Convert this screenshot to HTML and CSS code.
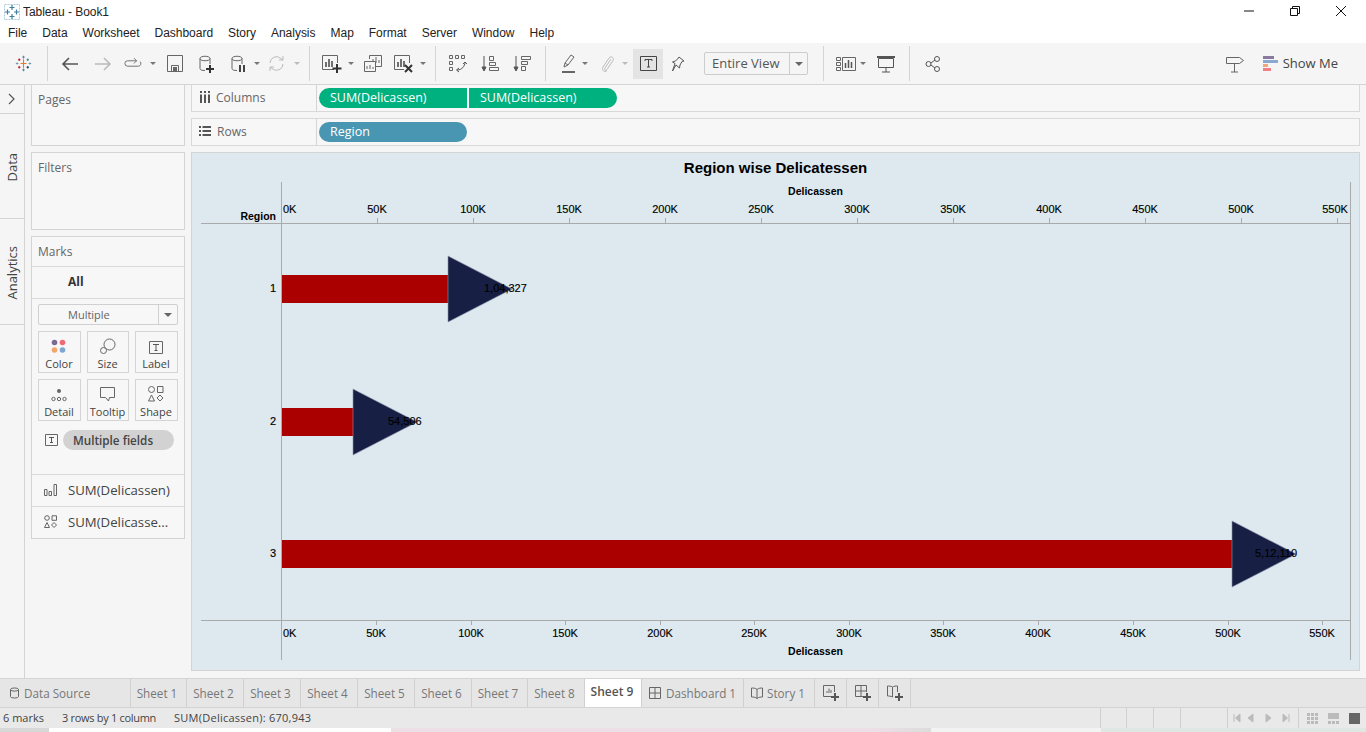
FILE: index.html
```html
<!DOCTYPE html>
<html lang="en">
<head>
<meta charset="utf-8">
<title>Tableau - Book1</title>
<link rel="stylesheet" href="styles.css">
</head>
<body>
<header class="titlebar">
  <div class="title-left">
    <svg class="app-logo" width="18" height="18" viewBox="0 0 18 18"><path d="M1.500 1.500h15v15h-15z" fill="none" stroke="#a9c8da" stroke-dasharray="2 1"/><g stroke="#3f7ea3" stroke-width="1.200" fill="none"><path d="M9 2v5M6.500 4.500h5M9 11v5M6.500 13.500h5M2 9h5M4.500 6.500v5M11 9h5M13.500 6.500v5"/></g></svg>
    <span>Tableau - Book1</span>
  </div>
  <div class="win-buttons">
    <svg width="12" height="12" viewBox="0 0 12 12"><path d="M1 6h10" stroke="#111" fill="none"/></svg>
    <svg width="12" height="12" viewBox="0 0 12 12"><path d="M1.500 3.500h7v7h-7zM3.500 3.500v-2h7v7h-2" stroke="#111" fill="none"/></svg>
    <svg width="12" height="12" viewBox="0 0 12 12"><path d="M1 1l10 10M11 1L1 11" stroke="#111" fill="none"/></svg>
  </div>
</header>
<nav class="menubar">
  <span>File</span><span>Data</span><span>Worksheet</span><span>Dashboard</span><span>Story</span><span>Analysis</span><span>Map</span><span>Format</span><span>Server</span><span>Window</span><span>Help</span>
</nav>
<div class="toolbar">
  <div class="tool-group tg-logo">
    <svg width="17" height="17" viewBox="0 0 20 20"><g fill="none" stroke-width="1.300"><path d="M10 5v10M6.500 10h7" stroke="#e8762b"/><path d="M10 1v3M8.700 2.500h2.600M10 16v3M8.700 17.500h2.600" stroke="#5b879b"/><path d="M1 10h3M2.500 8.700v2.600M16 10h3M17.500 8.700v2.600" stroke="#7099a6"/><path d="M5 4v3M3.700 5.500h2.600" stroke="#c72035"/><path d="M15 4v3M13.700 5.500h2.600" stroke="#59879b"/><path d="M5 13v3M3.700 14.500h2.600" stroke="#c72035"/><path d="M15 13v3M13.700 14.500h2.600" stroke="#1f447d"/></g></svg>
  </div>
  <div class="tool-group tg-history">
    <svg width="18" height="16" viewBox="0 0 18 16"><path d="M17 8H2M8 2L2 8l6 6" fill="none" stroke="#555" stroke-width="1.600"/></svg>
    <svg class="gap15" width="18" height="16" viewBox="0 0 18 16"><path d="M1 8h15M10 2l6 6-6 6" fill="none" stroke="#bbb" stroke-width="1.600"/></svg>
    <svg class="gap12" width="18" height="13" viewBox="0 0 20 14"><path d="M14 4H4a3 3 0 0 0 0 6h12a3 3 0 0 0 2-5M11 1l3 3-3 3" fill="none" stroke="#666"/></svg>
    <i class="caret"></i>
    <svg class="gap11" width="16" height="17" viewBox="0 0 16 17"><path d="M.5.500h15v16H.5zM4.500 16.500v-6h7v6" fill="none" stroke="#666"/><path d="M6 12h4v4H6z" fill="#666"/></svg>
    <svg class="gap16" width="16" height="18" viewBox="0 0 16 18"><path d="M1 3.500C1 .5 11 .5 11 3.500S1 6.500 1 3.500v10c0 1.500 2 2 5 2M11 3.500V9" fill="none" stroke="#666"/><path d="M10 10h2v3h3v2h-3v3h-2v-3H7v-2h3z" fill="#333"/></svg>
    <svg class="gap16" width="16" height="18" viewBox="0 0 16 18"><path d="M1 3.500C1 .5 11 .5 11 3.500S1 6.500 1 3.500v10c0 1.500 2 2 5 2M11 3.500V9" fill="none" stroke="#666"/><path d="M8 10h2v7H8zM12 10h2v7h-2z" fill="#444"/></svg>
    <i class="caret caret-m7"></i>
    <svg class="gap8" width="17" height="17" viewBox="0 0 17 17"><path d="M2 8a6.500 6.500 0 0 1 11-4.500L15 5M15 9a6.500 6.500 0 0 1-11 4.500L2 12M15 1v4h-4M2 16v-4h4" fill="none" stroke="#bbb"/></svg>
    <i class="caret caret-dim caret-m9"></i>
  </div>
  <div class="tool-group tg-sheet">
    <svg width="20" height="18" viewBox="0 0 20 18"><path d="M12 14.500H.5V.5h15V8" fill="none" stroke="#666"/><path d="M4 7v5M7 4v8M10 6v6" stroke="#444" stroke-width="1.500"/><path d="M14 9h2v3.500h3.500v2H16V18h-2v-3.500h-3.500v-2H14z" fill="#333"/></svg>
    <i class="caret caret-m6"></i>
    <svg class="gap10" width="18" height="17" viewBox="0 0 18 17"><path d="M5.500 4V.5h12v11H12M.5 6.500h11v10H.5z" fill="#f5f5f5" stroke="#666"/><path d="M9 6V4M12 8V2M15 8V5M3 14v-3M6 14v-4M9 14v-2" stroke="#666"/></svg>
    <svg class="gap12" width="20" height="18" viewBox="0 0 20 18"><path d="M10 14.500H.5V.5h15V8" fill="none" stroke="#666"/><path d="M4 7v5M7 4v8M10 6v6" stroke="#444" stroke-width="1.500"/><path d="M11 10l7 7M18 10l-7 7" stroke="#333" stroke-width="2"/></svg>
    <i class="caret caret-m6"></i>
  </div>
  <div class="tool-group tg-sort">
    <svg width="18" height="18" viewBox="0 0 18 18"><path d="M.5.500h3v3h-3zM6.500.500h3v3h-3zM12.500.500h3v3h-3zM.5 6.500h3v3h-3zM.5 12.500h3v3h-3z" fill="none" stroke="#666"/><path d="M16 7c0 4-3 8-8 8M10 13l-2.500 2 2.500 2M14 9l2-2 2 2" fill="none" stroke="#555"/></svg>
    <svg class="gap14" width="18" height="18" viewBox="0 0 18 18"><path d="M3 1v14M1 12l2 4 2-4z" fill="#555" stroke="#555"/><path d="M8.500 1.500h4v4h-4zM8.500 7.500h6v3h-6zM8.500 12.500h9v3h-9z" fill="none" stroke="#666"/></svg>
    <svg class="gap14" width="18" height="18" viewBox="0 0 18 18"><path d="M3 1v14M1 12l2 4 2-4z" fill="#555" stroke="#555"/><path d="M8.500 1.500h9v3h-9zM8.500 6.500h6v3h-6zM8.500 11.500h4v4h-4z" fill="none" stroke="#666"/></svg>
  </div>
  <div class="tool-group tg-format">
    <svg width="16" height="20" viewBox="0 0 16 20"><path d="M3 13l1-4 6-8 3 2-6 8zM4 9l3 2" fill="none" stroke="#666"/><path d="M1 17h13v2H1z" fill="#666"/></svg>
    <i class="caret caret-m5"></i>
    <svg class="gap12" width="14" height="18" viewBox="0 0 14 18"><path d="M11 4L5 13c-1.500 2 1 3 2 1.500l6-9c1.500-3-2-5-4-2.500L3 12c-2 3 2 6 4 3.500" fill="none" stroke="#bbb"/></svg>
    <i class="caret caret-dim"></i>
    <span class="tool-active"><svg width="17" height="15" viewBox="0 0 17 15"><path d="M.5.500h16v14H.5z" fill="none" stroke="#444"/><path d="M5 3.500h7M8.500 3.500V11M7 11h3M5 3.500V5M12 3.500V5" fill="none" stroke="#444"/></svg></span>
    <svg class="gap8" width="14" height="16" viewBox="0 0 14 16"><path d="M8 1l5 4-2 .5-2 3.500-.5 3L5 9 1.500 15 4 7.500 1.500 6l3-1 2-2z" fill="none" stroke="#555"/></svg>
    <div class="fit-select"><span class="fit-label">Entire View</span><span class="fit-arrow"><i class="caret caret-dark"></i></span></div>
  </div>
  <div class="tool-group tg-show">
    <svg width="20" height="16" viewBox="0 0 20 16"><path d="M.5 1.500h4v3h-4zM.5 6.500h4v3h-4zM.5 11.500h4v3h-4zM6.500 1.500h13v13h-13z" fill="none" stroke="#666"/><path d="M9.500 7v5M12.500 4v8M15.500 6v6" stroke="#555" stroke-width="1.500"/></svg>
    <i class="caret caret-m4"></i>
    <svg class="gap11" width="18" height="18" viewBox="0 0 18 18"><path d="M1.500 3.500h15v9h-15zM9 12.500V17M5 17h8" fill="none" stroke="#555"/><path d="M0 1h18v2H0z" fill="#555"/></svg>
  </div>
  <div class="tool-group tg-share">
    <svg width="16" height="16" viewBox="0 0 16 16"><g fill="none" stroke="#555"><circle cx="3.500" cy="8" r="2.500"/><circle cx="12" cy="3" r="2.500"/><circle cx="12" cy="13" r="2.500"/><path d="M6 7l4-3M6 9l4 3"/></g></svg>
  </div>
  <div class="tool-right">
    <svg width="18" height="18" viewBox="0 0 18 18"><path d="M.5 2.500h13l4 3-4 3H.5zM8.500 8.500V17M5 17h7" fill="none" stroke="#666"/></svg>
    <span class="show-me"><svg width="15" height="15" viewBox="0 0 15 15"><path d="M0 0h11v3H0z" fill="#8a7a9f"/><path d="M0 4h15v3H0z" fill="#8aa8d0"/><path d="M0 8h5v3H0z" fill="#f0a878"/><path d="M0 12h8v3H0z" fill="#f08088"/></svg><span class="show-me-text">Show Me</span></span>
  </div>
</div>
<main class="workspace">
  <aside class="rail">
    <div class="rail-cell rail-toggle"><svg width="8" height="12" viewBox="0 0 8 12"><path d="M1 1l5 5-5 5" fill="none" stroke="#555" stroke-width="1.200"/></svg></div>
    <div class="rail-cell rail-data"><span class="rail-text">Data</span></div>
    <div class="rail-cell rail-analytics"><span class="rail-text">Analytics</span></div>
  </aside>
  <section class="side">
    <div class="card card-pages"><div class="card-title">Pages</div></div>
    <div class="card card-filters"><div class="card-title">Filters</div></div>
    <div class="card card-marks">
      <div class="marks-title">Marks</div>
      <div class="marks-all">All</div>
      <div class="marks-body">
        <div class="mark-select"><span class="mark-select-label">Multiple</span><span class="mark-select-arrow"><i class="caret caret-dark"></i></span></div>
        <div class="mark-grid">
          <div class="mark-btn"><svg width="16" height="16" viewBox="0 0 16 16"><circle cx="3.500" cy="4.500" r="2.800" fill="#7b6a93"/><circle cx="11.500" cy="4.500" r="2.800" fill="#ef6a75"/><circle cx="3.500" cy="12" r="2.800" fill="#f2a66e"/><circle cx="11.500" cy="12" r="2.800" fill="#7ea6d0"/></svg><span>Color</span></div>
          <div class="mark-btn"><svg width="16" height="16" viewBox="0 0 16 16"><circle cx="9.500" cy="6.500" r="5.500" fill="none" stroke="#666"/><circle cx="3.500" cy="12.500" r="3" fill="#f7f7f7" stroke="#666"/></svg><span>Size</span></div>
          <div class="mark-btn"><svg width="14" height="13" viewBox="0 0 14 13"><path d="M.5.500h13v12H.5z" fill="none" stroke="#666"/><path d="M4 3.500h6M7 3.500v6M5.500 9.500h3" fill="none" stroke="#555"/></svg><span>Label</span></div>
          <div class="mark-btn"><svg width="16" height="14" viewBox="0 0 16 14"><circle cx="8" cy="3" r="2" fill="#666"/><g fill="none" stroke="#666"><circle cx="2.500" cy="11" r="1.700"/><circle cx="8" cy="11" r="1.700"/><circle cx="13.500" cy="11" r="1.700"/></g></svg><span>Detail</span></div>
          <div class="mark-btn"><svg width="15" height="15" viewBox="0 0 15 15"><path d="M.5.500h14v10H9.500l-1 3.500-3-3.500h-5z" fill="none" stroke="#666"/></svg><span>Tooltip</span></div>
          <div class="mark-btn"><svg width="16" height="16" viewBox="0 0 16 16"><g fill="none" stroke="#666"><circle cx="3.500" cy="3.500" r="3"/><path d="M9.500.5h5.500v6H9.500zM3.500 9l3 6h-6zM12 9l3 3-3 3-3-3z"/></g></svg><span>Shape</span></div>
        </div>
        <div class="mark-field">
          <svg width="13" height="12" viewBox="0 0 13 12"><path d="M.5.500h12v11H.5z" fill="none" stroke="#666"/><path d="M4 3.500h5M6.500 3.500v5M5 8.500h3" fill="none" stroke="#555"/></svg>
          <span class="pill-grey">Multiple fields</span>
        </div>
      </div>
      <div class="marks-row"><svg width="13" height="12" viewBox="0 0 13 12"><path d="M.5 5.500h2.500v6H.5zM5 7.500h2.500v4H5zM10 .5h2.500v11H10z" fill="none" stroke="#666"/></svg><span>SUM(Delicassen)</span></div>
      <div class="marks-row"><svg width="13" height="13" viewBox="0 0 13 13"><g fill="none" stroke="#666"><circle cx="3" cy="3" r="2.300"/><path d="M8 .8h4.500v4.500H8zM3 7.500l2.500 5H.5zM10 7.500l2.500 2.500-2.500 2.500L7.500 10z"/></g></svg><span>SUM(Delicasse...</span></div>
    </div>
  </section>
  <section class="content">
    <div class="shelf shelf-columns">
      <div class="shelf-label"><svg width="11" height="12" viewBox="0 0 11 12"><path d="M1 0h2v2H1zM5 0h2v2H5zM9 0h2v2H9zM1 3.500h2V12H1zM5 3.500h2V12H5zM9 3.500h2V12H9z" fill="#555"/></svg><span>Columns</span></div>
      <div class="shelf-pills"><span class="pill pill-green">SUM(Delicassen)</span><span class="pill pill-green">SUM(Delicassen)</span></div>
    </div>
    <div class="shelf shelf-rows">
      <div class="shelf-label"><svg width="12" height="10" viewBox="0 0 12 10"><path d="M0 0h2v2H0zM3.500 0H12v2H3.500zM0 4h2v2H0zM3.500 4H12v2H3.500zM0 8h2v2H0zM3.500 8H12v2H3.500z" fill="#555"/></svg><span>Rows</span></div>
      <div class="shelf-pills"><span class="pill pill-blue">Region</span></div>
    </div>
    <div class="viz">
      <svg class="chart" width="1167" height="517" viewBox="192 153 1167 517">
        <text class="t-title" x="775.500" y="173">Region wise Delicatessen</text>
        <text class="t-axis-title" x="815.500" y="195">Delicassen</text>
        <text class="t-axis-title t-end" x="276" y="220">Region</text>
        <g class="axis-lines">
          <path d="M281.500 182V660M201 223.500H1350.500M201 620.500H1350.500M1350.500 182V660"/>
          <path d="M377.500 218v5M473.500 218v5M569.500 218v5M665.500 218v5M761.500 218v5M857.500 218v5M953.500 218v5M1049.500 218v5M1145.500 218v5M1241.500 218v5M1337.500 218v5"/>
          <path d="M376.500 621v4M471.500 621v4M565.500 621v4M660.500 621v4M754.500 621v4M849.500 621v4M943.500 621v4M1038.500 621v4M1133.500 621v4M1228.500 621v4M1322.500 621v4"/>
        </g>
        <g class="ticks">
          <text x="283" y="213">0K</text><text class="t-mid" x="377" y="213">50K</text><text class="t-mid" x="473" y="213">100K</text><text class="t-mid" x="569" y="213">150K</text><text class="t-mid" x="665" y="213">200K</text><text class="t-mid" x="761" y="213">250K</text><text class="t-mid" x="857" y="213">300K</text><text class="t-mid" x="953" y="213">350K</text><text class="t-mid" x="1049" y="213">400K</text><text class="t-mid" x="1145" y="213">450K</text><text class="t-mid" x="1241" y="213">500K</text><text class="t-mid" x="1335" y="213">550K</text>
          <text x="283" y="637">0K</text><text class="t-mid" x="376" y="637">50K</text><text class="t-mid" x="471" y="637">100K</text><text class="t-mid" x="565" y="637">150K</text><text class="t-mid" x="660" y="637">200K</text><text class="t-mid" x="754" y="637">250K</text><text class="t-mid" x="849" y="637">300K</text><text class="t-mid" x="943" y="637">350K</text><text class="t-mid" x="1038" y="637">400K</text><text class="t-mid" x="1133" y="637">450K</text><text class="t-mid" x="1228" y="637">500K</text><text class="t-mid" x="1322" y="637">550K</text>
          <text class="t-end" x="276" y="292">1</text><text class="t-end" x="276" y="425">2</text><text class="t-end" x="276" y="557">3</text>
        </g>
        <text class="t-axis-title" x="815.500" y="655">Delicassen</text>
        <g class="bars">
          <rect x="282" y="275" width="200" height="28"/>
          <rect x="282" y="408" width="104" height="28"/>
          <rect x="282" y="540" width="982" height="28"/>
        </g>
        <g class="arrows">
          <path d="M448 256L512 289 448 322Z"/>
          <path d="M353 389L417 422 353 455Z"/>
          <path d="M1232 521L1296 554 1232 587Z"/>
        </g>
        <g class="ticks">
          <text x="484" y="292">1,04,327</text>
          <text x="388" y="425">54,506</text>
          <text x="1255" y="557">5,12,110</text>
        </g>
      </svg>
    </div>
  </section>
</main>
<div class="tabs">
  <div class="tab tab-source"><svg width="10" height="12" viewBox="0 0 10 12"><path d="M.5 2.500C.5.500 8.500.500 8.500 2.500v7C8.500 11.500.5 11.500.5 9.500zM.5 3c1 1.500 7 1.500 8 0" fill="none" stroke="#666"/></svg><span>Data Source</span></div>
  <div class="tab tab-56">Sheet 1</div><div class="tab">Sheet 2</div><div class="tab">Sheet 3</div><div class="tab">Sheet 4</div><div class="tab">Sheet 5</div><div class="tab">Sheet 6</div><div class="tab tab-56">Sheet 7</div><div class="tab">Sheet 8</div>
  <div class="tab tab-active">Sheet 9</div>
  <div class="tab tab-dash"><svg width="12" height="12" viewBox="0 0 12 12"><path d="M.5.500h11v11H.5zM.5 6h11M6 .5v11" fill="none" stroke="#666"/></svg><span>Dashboard 1</span></div>
  <div class="tab tab-story"><svg width="12" height="12" viewBox="0 0 12 12"><path d="M6 2.500C4.500 1 2 1 .5 1v9c1.500 0 4 0 5.500 1.500C7.500 10 10 10 11.500 10V1C10 1 7.500 1 6 2.500zM6 2.500v9" fill="none" stroke="#666"/></svg><span>Story 1</span></div>
  <div class="tab tab-add"><svg width="16" height="16" viewBox="0 0 16 16"><path d="M9 11.500H.5V.5h11V7" fill="none" stroke="#666"/><path d="M4 8V6M6 8V3.500M8 8V5" stroke="#666"/><path d="M11 8h2v3h3v2h-3v3h-2v-3H8v-2h3z" fill="#555"/></svg></div>
  <div class="tab tab-add"><svg width="16" height="16" viewBox="0 0 16 16"><path d="M9 11.500H.5V.5h11V7M.5 6h11M6 .5v11" fill="none" stroke="#666"/><path d="M11 8h2v3h3v2h-3v3h-2v-3H8v-2h3z" fill="#555"/></svg></div>
  <div class="tab tab-add"><svg width="16" height="16" viewBox="0 0 16 16"><path d="M5.500 2C4 1 2 1 .5 1v10c1.500 0 3 0 5 1M5.500 2C7 1 9 1 10.500 1v6M5.500 2v10" fill="none" stroke="#666"/><path d="M11 8h2v3h3v2h-3v3h-2v-3H8v-2h3z" fill="#555"/></svg></div>
</div>
<footer class="status">
  <div class="status-left"><span>6 marks</span><span class="status-rows">3 rows by 1 column</span><span class="status-sum">SUM(Delicassen): 670,943</span></div>
  <div class="status-right">
    <span class="status-cell w26"></span><span class="status-cell w27"></span><span class="status-cell w27"></span><span class="status-cell w47"></span>
    <span class="status-cell pager"><svg width="60" height="10" viewBox="0 0 60 10"><path d="M1 1v8M7 1L2.500 5 7 9zM20 1l-5 4 5 4zM33 1l5 4-5 4zM50 1l4.500 4L50 9zM56 1v8" fill="#bbb" stroke="#bbb"/></svg></span>
    <span class="status-views"><svg width="53" height="11" viewBox="0 0 53 11"><path d="M0 0h3v3H0zM4 0h3v3H4zM8 0h3v3H8zM0 4h3v3H0zM4 4h3v3H4zM8 4h3v3H8zM0 8h3v3H0zM4 8h3v3H4zM8 8h3v3H8zM21 0h11v6H21zM21 8h3v3h-3zM25 8h3v3h-3zM29 8h3v3h-3z" fill="#bbb"/><path d="M42 0h11v11H42z" fill="#666"/></svg></span>
  </div>
</footer>
<div class="desktop-strip"><span class="strip-a"></span><span class="strip-b"></span><span class="strip-c"></span><span class="strip-d"></span></div>
</body>
</html>
```
FILE: styles.css
```css
* { box-sizing: border-box; }
html, body { margin: 0; height: 100%; }
body { width: 1366px; height: 732px; overflow: hidden; display: flex; flex-direction: column; background: #f5f5f5; font-family: "Open Sans", "Liberation Sans", sans-serif; font-size: 12px; color: #555; }

.titlebar { height: 23px; background: #fff; display: flex; justify-content: space-between; align-items: center; flex: none; }
.title-left { display: flex; align-items: center; gap: 2px; padding-left: 3px; color: #222; font-family: "Liberation Sans", sans-serif; font-size: 12px; letter-spacing: -.05px; }
.win-buttons { display: flex; gap: 34px; padding: 0 19px 2px 0; }
.menubar { height: 20px; background: #fff; display: flex; gap: 15px; align-items: center; padding-left: 8px; color: #222; flex: none; font-family: "Liberation Sans", sans-serif; font-size: 12px; letter-spacing: -.02px; }

.toolbar { height: 42px; display: flex; align-items: center; border-bottom: 1px solid #d4d4d4; flex: none; background: #f5f5f5; }
.tool-group { display: flex; align-items: center; height: 35px; border-right: 1px solid #d4d4d4; flex: none; }
.tg-logo { width: 48px; padding-left: 15px; }
.tg-history { width: 262px; padding-left: 13px; }
.tg-sheet { width: 126px; padding-left: 12px; }
.tg-sort { width: 110px; padding-left: 13px; }
.tg-format { width: 278px; padding-left: 15px; }
.tg-show { width: 86px; padding-left: 12px; }
.tg-share { width: 44px; padding-left: 15px; border-right: 0; }
.tool-right { margin-left: auto; display: flex; align-items: center; gap: 19px; padding-right: 28px; }
.show-me { display: flex; align-items: center; gap: 5px; color: #444; font-size: 13px; }
.show-me-text { padding-bottom: 2px; }
.caret { display: inline-block; width: 0; height: 0; border: 3px solid transparent; border-top: 3px solid #777; border-bottom: 0; margin-left: 8px; flex: none; }
.caret-dim { border-top-color: #bbb; }
.caret-dark { border-top-color: #666; border-left-width: 4px; border-right-width: 4px; border-top-width: 4px; margin-left: 0; }
.caret-m4 { margin-left: 4px; } .caret-m5 { margin-left: 5px; } .caret-m6 { margin-left: 6px; } .caret-m7 { margin-left: 7px; } .caret-m9 { margin-left: 9px; }
.gap8 { margin-left: 8px; } .gap10 { margin-left: 10px; } .gap11 { margin-left: 11px; } .gap12 { margin-left: 12px; } .gap14 { margin-left: 14px; } .gap15 { margin-left: 15px; } .gap16 { margin-left: 16px; }
.tool-active { width: 30px; height: 30px; background: #e4e4e4; display: flex; align-items: center; justify-content: center; margin-left: 5px; }
.fit-select { margin-left: 19px; width: 104px; height: 23px; border: 1px solid #ccc; border-radius: 2px; display: flex; align-items: center; background: #f5f5f5; }
.fit-label { flex: 1; padding: 0 0 2px 7px; font-size: 13px; color: #555; white-space: nowrap; }
.fit-arrow { width: 18px; height: 21px; border-left: 1px solid #ccc; display: flex; align-items: center; justify-content: center; flex: none; }

.workspace { height: 593px; flex: none; display: flex; background: #f5f5f5; }
.rail { width: 25px; flex: none; border-right: 1px solid #d4d4d4; display: flex; flex-direction: column; background: #f5f5f5; }
.rail-cell { display: flex; align-items: center; justify-content: center; border-bottom: 1px solid #d4d4d4; flex: none; }
.rail-toggle { height: 29px; }
.rail-data { height: 105px; }
.rail-analytics { height: 106px; }
.rail-text { writing-mode: vertical-rl; transform: rotate(180deg) translate(0, -1px); font-size: 13px; color: #444; }

.side { width: 166px; flex: none; padding: 0 0 0 6px; display: flex; flex-direction: column; gap: 6px; }
.card { background: #f7f7f7; border: 1px solid #d4d4d4; width: 154px; flex: none; }
.card-pages { height: 61px; border-top: 0; }
.card-filters { height: 78px; }
.card-title { padding: 6px 0 0 6px; color: #666; }
.card-marks { height: 303px; display: flex; flex-direction: column; }
.marks-title { height: 30px; padding: 6px 0 0 6px; border-bottom: 1px solid #d9d9d9; color: #666; flex: none; }
.marks-all { height: 32px; padding: 6px 0 0 36px; border-bottom: 1px solid #d9d9d9; font-weight: 700; color: #333; flex: none; }
.marks-body { height: 176px; padding: 5px 6px 0; border-bottom: 1px solid #d9d9d9; flex: none; }
.mark-select { height: 21px; border: 1px solid #d0d0d0; border-radius: 2px; display: flex; align-items: center; }
.mark-select-label { flex: 1; padding-left: 29px; font-size: 11px; color: #666; }
.mark-select-arrow { width: 19px; height: 19px; border-left: 1px solid #d0d0d0; display: flex; align-items: center; justify-content: center; }
.mark-grid { display: grid; grid-template-columns: 43px 42px 43px; column-gap: 6px; row-gap: 6px; margin-top: 6px; }
.mark-btn { height: 42px; border: 1px solid #d4d4d4; display: flex; flex-direction: column; align-items: center; justify-content: flex-end; padding: 0 1px 1px 0; gap: 2px; font-size: 11px; color: #444; white-space: nowrap; }
.mark-field { display: flex; align-items: center; gap: 5px; margin-top: 9px; padding-left: 7px; }
.pill-grey { width: 111px; height: 20px; border-radius: 10px; background: #d2d2d2; color: #444; font-weight: 600; font-size: 11.700px; display: flex; align-items: center; padding: 0 0 1px 10px; white-space: nowrap; }
.marks-row { height: 32px; display: flex; align-items: center; gap: 11px; padding: 0 0 2px 12px; color: #444; border-bottom: 1px solid #d9d9d9; font-size: 13.200px; white-space: nowrap; flex: none; }
.marks-row:last-child { border-bottom: 0; height: 31px; }

.content { flex: 1; display: flex; flex-direction: column; gap: 6px; padding-right: 6px; }
.shelf { flex: none; display: flex; background: #f7f7f7; border: 1px solid #d9d9d9; }
.shelf-columns { height: 27px; border-top: 0; }
.shelf-rows { height: 28px; }
.shelf-label { width: 125px; flex: none; border-right: 1px solid #d4d4d4; display: flex; align-items: center; gap: 6px; padding: 0 0 2px 7px; color: #666; }
.shelf-pills { display: flex; align-items: center; gap: 2px; padding-left: 2px; }
.pill { width: 148px; height: 20px; display: flex; align-items: center; padding: 0 0 1px 11px; color: #fff; font-size: 12.500px; white-space: nowrap; }
.pill-green { background: #00b180; }
.pill-green:first-child { border-radius: 10px 0 0 10px; }
.pill-green:last-child { border-radius: 0 10px 10px 0; }
.pill-blue { background: #4996b2; border-radius: 10px; }

.viz { height: 519px; flex: none; background: #dde8ef; border: 1px solid #d4d4d4; }
.chart { display: block; }
.chart text { font-family: "Liberation Sans", sans-serif; font-size: 11px; fill: #000; stroke: #000; stroke-width: .15px; }
.chart .t-title { font-size: 15px; font-weight: 700; text-anchor: middle; stroke-width: 0; }
.chart .t-axis-title { font-size: 10.500px; font-weight: 700; text-anchor: middle; stroke-width: 0; }
.chart .t-end { text-anchor: end; }
.chart .t-mid { text-anchor: middle; }
.axis-lines path { fill: none; stroke: #aaa; stroke-width: 1; }
.bars rect { fill: #ab0000; }
.arrows path { fill: #172044; stroke: #8d96ab; stroke-width: .6; }

.tabs { height: 30px; flex: none; display: flex; background: #e6e6e6; border-top: 1px solid #d4d4d4; border-bottom: 1px solid #d4d4d4; font-size: 11.700px; }
.tab { padding: 0 3px 1px 0; display: flex; align-items: center; gap: 5px; border-right: 1px solid #d0d0d0; color: #777; white-space: nowrap; flex: none; width: 57px; justify-content: center; }
.tab-source { width: 131px; justify-content: flex-start; padding-left: 10px; gap: 4px; }
.tab-56 { width: 56px; }
.tab-active { background: #fff; color: #555; font-weight: 600; padding: 0 2px 3px 0; font-size: 12px; }
.tab-dash { width: 102px; justify-content: flex-start; padding-left: 7px; }
.tab-story { width: 71px; justify-content: flex-start; padding-left: 7px; gap: 4px; }
.tab-add { width: 32px; padding: 0; }

.status { height: 20px; flex: none; display: flex; justify-content: space-between; background: #e9e9e9; }
.status-left { display: flex; gap: 18px; padding: 0 0 1px 3px; align-items: center; font-size: 11px; color: #444; white-space: nowrap; }
.status-rows { letter-spacing: -.3px; }
.status-sum { letter-spacing: .25px; }
.status-right { display: flex; }
.status-cell { display: flex; align-items: center; justify-content: center; border-left: 1px solid #d0d0d0; height: 20px; }
.w26 { width: 26px; }
.w27 { width: 27px; }
.w47 { width: 47px; }
.pager { width: 71px; }
.status-views { width: 68px; border-left: 1px solid #d0d0d0; display: flex; align-items: center; padding-left: 8px; }
.desktop-strip { height: 4px; flex: none; display: flex; }
.strip-a { width: 49px; background: #d7d7d7; }
.strip-b { width: 342px; background: #fff; }
.strip-c { width: 540px; background: linear-gradient(90deg, #ecdfe6 0 90%, #dcdcdc); }
.strip-d { flex: 1; background: linear-gradient(90deg, #f3f3f3 0 170px, #dfe6e3 170px); }
```
